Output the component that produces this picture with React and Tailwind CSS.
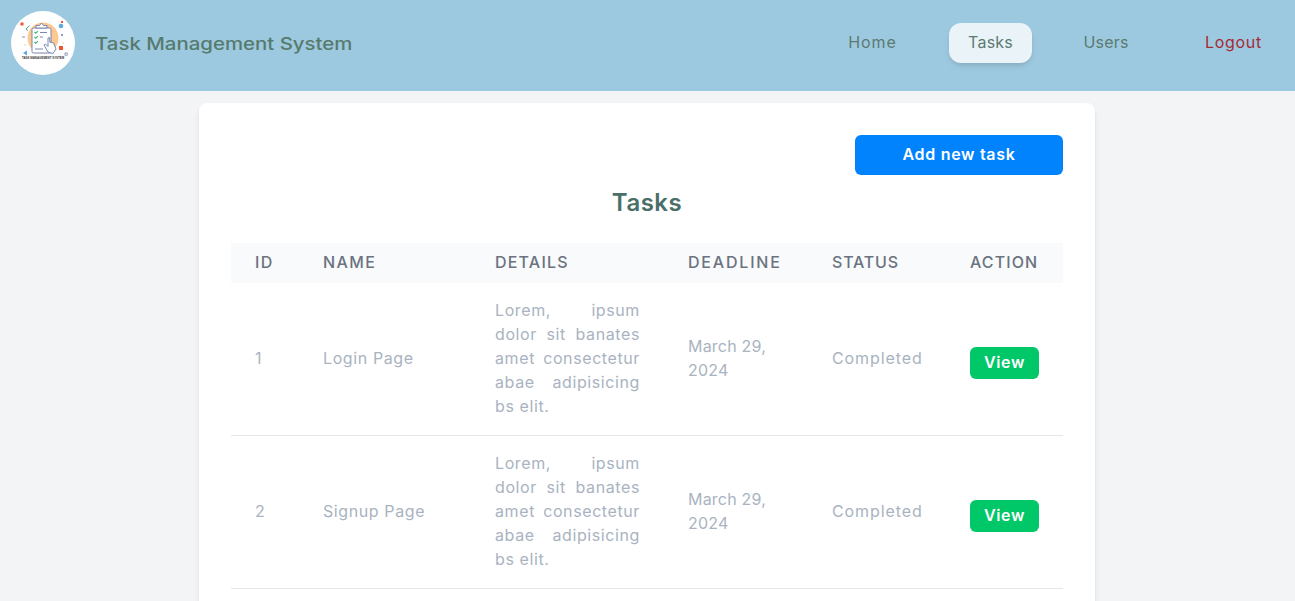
const tasks = [
  { id: 1, name: 'Login Page' },
  { id: 2, name: 'Signup Page' },
];

const details = 'Lorem, ipsum dolor sit banates amet consectetur abae adipisicing bs elit.';

const Logo = () => (
  <svg viewBox="0 0 64 64" className="w-16 h-16 rounded-full bg-white shrink-0">
    {/* disque orange + presse-papier */}
    <circle cx="32" cy="27" r="15.500" fill="#fcc993" />
    <rect x="21" y="17" width="19" height="25" rx="1.500" fill="#fff" stroke="#6d7aa8" strokeWidth="0.900" />
    <path d="M25 17v-2.500h3.500l2-2.500 2 2.500H36V17z" fill="#fff" stroke="#6d7aa8" strokeWidth="0.900" />
    <path d="M23.500 21l1.300 1.300 2-2.200M23.500 26l1.300 1.300 2-2.200M23.500 31l1.300 1.300 2-2.200" fill="none" stroke="#3fae6a" strokeWidth="1.100" />
    <path d="M29 21.500h7M29 26h3M24 38h8" stroke="#6d7aa8" strokeWidth="0.900" />
    {/* main */}
    <path d="M37 41l-4-7 1.500-1 2.500 2.500V27l1.500-.5.500 5 1-.5 1 .5 1.500.5 2.500 6-3 4.500-2-.5z" fill="#fff" stroke="#6d7aa8" strokeWidth="0.900" />
    {/* confettis */}
    <rect x="9.500" y="11.500" width="3" height="3" fill="#f2552c" />
    <path d="M15 18l3.500-3.500" stroke="#4caf6e" strokeWidth="1" />
    <path d="M15 18l2 1.500" stroke="#4caf6e" strokeWidth="1" />
    <circle cx="50" cy="15" r="2.300" fill="#5aa9e0" />
    <rect x="50" y="10" width="2" height="2" fill="#f2552c" />
    <circle cx="51" cy="24" r="1" fill="#6d7aa8" />
    <rect x="48" y="35" width="4" height="4" fill="#f2552c" />
    <rect x="54" y="42" width="2.200" height="2.200" fill="none" stroke="#6d7aa8" strokeWidth="0.700" />
    <path d="M11 26h3" stroke="#6d7aa8" strokeWidth="0.800" />
    <circle cx="14" cy="34" r="0.800" fill="#fcc993" />
    <circle cx="52" cy="32" r="0.800" fill="#fcc993" />
    <path d="M12 42l4-2.500v5z" fill="#5aa9e0" />
    <circle cx="15" cy="59" r="0.600" fill="#4caf6e" />
    <text x="32" y="48" textAnchor="middle" fontSize="2.900" fontWeight="600" fill="#333" fontFamily="Liberation Sans, sans-serif">TASK MANAGEMENT SYSTEM</text>
  </svg>
);

const NavLink = ({ label, className }) => (
  <a
    href="#"
    className={`h-10 pb-0.5 flex items-center justify-center rounded-xl text-base ${className}`}
  >
    {label}
  </a>
);

const App = () => {
  return (
    <div className="h-screen overflow-hidden bg-[#f2f4f6] font-['Inter',sans-serif]">
      {/* Navbar */}
      <nav className="h-[91px] bg-[#9dc9e0] flex items-center justify-between pl-[11px] pr-[13px] pb-[5px]">
        <div className="flex items-center gap-5">
          <Logo />
          <span className="mt-1 origin-left scale-x-[1.2] text-[17px] font-medium text-[#567a6c]">
            Task Management System
          </span>
        </div>
        <div className="flex items-center gap-8">
          <NavLink label="Home" className="w-[89px] tracking-[0.9px] text-[#5b7a70]" />
          <NavLink label="Tasks" className="w-[83px] tracking-[0.2px] text-[#5b7a70] bg-[#e9f3f8] shadow-md" />
          <NavLink label="Users" className="w-[84px] tracking-[0.2px] text-[#5b7a70]" />
          <NavLink label="Logout" className="w-[97px] ml-[5px] tracking-[0.7px] text-[#a52a35]" />
        </div>
      </nav>

      {/* Contenu */}
      <div className="pr-px">
        <div className="max-w-[896px] mx-auto mt-3 bg-white rounded-lg shadow-md p-8">
          <div className="flex justify-end">
            <button className="w-[208px] h-10 pb-0.5 bg-[#0183fe] rounded-md text-white font-semibold text-base tracking-[0.7px]">
              Add new task
            </button>
          </div>
          <h2 className="text-center text-2xl font-semibold text-[#4a6f68] mt-3 mb-6 leading-8 tracking-[0.5px]">Tasks</h2>

          <table className="w-full table-fixed border-separate border-spacing-0 text-base tracking-[0.6px]">
            <colgroup>
              <col className="w-[68px]" />
              <col className="w-[172px]" />
              <col className="w-[193px]" />
              <col className="w-[144px]" />
              <col className="w-[138px]" />
              <col />
            </colgroup>
            <thead>
              <tr className="h-10 bg-[#f8fafb] text-left text-[#6b7280] uppercase">
                <th className="font-medium pl-6 pb-0.5 tracking-[1.4px]">ID</th>
                <th className="font-medium pl-6 pb-0.5 tracking-[1.4px]">Name</th>
                <th className="font-medium pl-6 pb-0.5 tracking-[1.2px]">Details</th>
                <th className="font-medium pl-6 pb-0.5 tracking-[1.8px]">Deadline</th>
                <th className="font-medium pl-6 pb-0.5 tracking-[0.8px]">Status</th>
                <th className="font-medium pl-6 pb-0.5 tracking-[1.1px]">Action</th>
              </tr>
            </thead>
            <tbody className="text-[#a9b3c1]">
              {tasks.map((task) => (
                <tr key={task.id} className="h-[153px] [&>td]:border-b [&>td]:border-[#e5e7eb] [&>td]:pb-0.5">
                  <td className="pl-6">{task.id}</td>
                  <td className="pl-6">{task.name}</td>
                  <td className="px-6 text-justify leading-6">{details}</td>
                  <td className="px-6 leading-6 tracking-[0.2px]">March 29, 2024</td>
                  <td className="pl-6 tracking-[0.9px]">Completed</td>
                  <td className="pl-6 pt-2.5">
                    <button className="w-[69px] h-8 pb-0.5 rounded-md bg-[#00c767] text-white font-semibold">View</button>
                  </td>
                </tr>
              ))}
            </tbody>
          </table>
        </div>
      </div>
    </div>
  );
};

export default App;
